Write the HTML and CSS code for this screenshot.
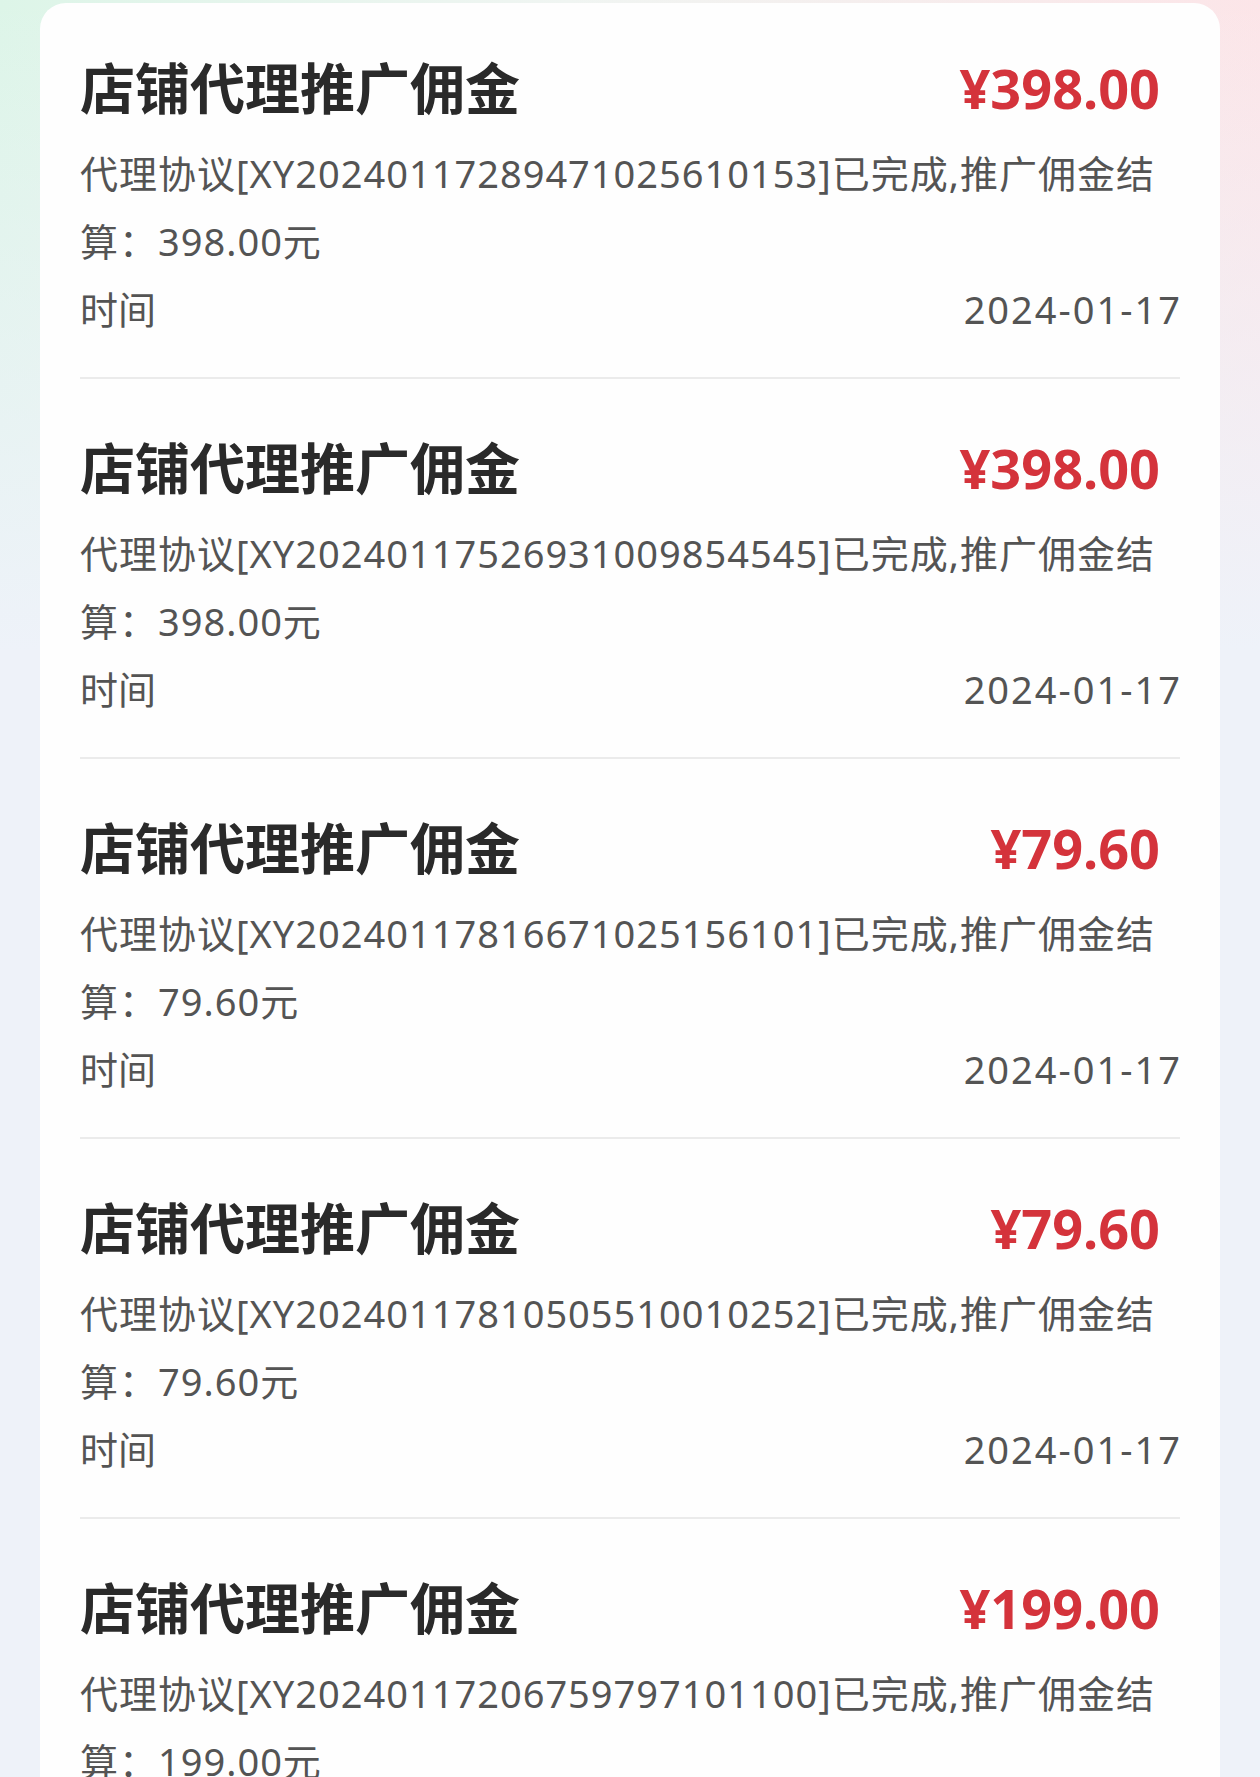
FILE: index.html
```html
<!DOCTYPE html>
<html>
<head>
    <meta charset="utf-8">
    <title>佣金明细</title>
    <link rel="stylesheet" href="styles.css">
</head>
<body>
    <div class="card">
        <div class="item">
            <div class="item-head">
                <span class="item-title">店铺代理推广佣金</span>
                <span class="item-amount">¥398.00</span>
            </div>
            <p class="item-desc">代理协议[XY20240117289471025610153]已完成,推广佣金结算：398.00元</p>
            <div class="item-time"><span>时间</span><span class="item-date">2024-01-17</span></div>
        </div>
        <div class="item">
            <div class="item-head">
                <span class="item-title">店铺代理推广佣金</span>
                <span class="item-amount">¥398.00</span>
            </div>
            <p class="item-desc">代理协议[XY20240117526931009854545]已完成,推广佣金结算：398.00元</p>
            <div class="item-time"><span>时间</span><span class="item-date">2024-01-17</span></div>
        </div>
        <div class="item">
            <div class="item-head">
                <span class="item-title">店铺代理推广佣金</span>
                <span class="item-amount">¥79.60</span>
            </div>
            <p class="item-desc">代理协议[XY20240117816671025156101]已完成,推广佣金结算：79.60元</p>
            <div class="item-time"><span>时间</span><span class="item-date">2024-01-17</span></div>
        </div>
        <div class="item">
            <div class="item-head">
                <span class="item-title">店铺代理推广佣金</span>
                <span class="item-amount">¥79.60</span>
            </div>
            <p class="item-desc">代理协议[XY20240117810505510010252]已完成,推广佣金结算：79.60元</p>
            <div class="item-time"><span>时间</span><span class="item-date">2024-01-17</span></div>
        </div>
        <div class="item">
            <div class="item-head">
                <span class="item-title">店铺代理推广佣金</span>
                <span class="item-amount">¥199.00</span>
            </div>
            <p class="item-desc">代理协议[XY20240117206759797101100]已完成,推广佣金结算：199.00元</p>
            <div class="item-time"><span>时间</span><span class="item-date">2024-01-17</span></div>
        </div>
    </div>
</body>
</html>
```

FILE: styles.css
```css
/* light app theme */
:root {
    --card: #fefefe;
    --title: #2a2a2a;
    --text: #545454;
    --red: #d4333b;
    --line: #ebebeb;
}
html, body { margin: 0; padding: 0; }
body {
    font-family: 'Noto Sans', 'Noto Sans CJK SC', sans-serif;
    background:
        linear-gradient(to bottom, rgba(238, 242, 249, 0) 0, #eef2f9 650px),
        linear-gradient(to right, #ddf5e8 0, #f0f5f2 45%, #fce5e8 100%);
    background-repeat: no-repeat;
    background-color: #eef2f9;
    min-height: 1777px;
    padding-top: 3px;
}
.card { margin: 0 40px; background: var(--card); border-radius: 26px 26px 0 0; padding: 0 40px; }
.item { padding: 47px 0 34px; border-bottom: 2px solid var(--line); }
.item + .item { padding-top: 51px; }
.item-head { display: flex; justify-content: space-between; align-items: center; height: 76px; }
.item-title { font-size: 55px; font-weight: bold; color: var(--title); line-height: 76px; }
.item-amount { font-size: 54px; font-weight: bold; color: var(--red); margin-right: 20px; line-height: 76px; }
.item-desc { margin: 13px 0 0; font-size: 38px; line-height: 68px; color: var(--text); letter-spacing: 1px; }
.item-time { display: flex; justify-content: space-between; font-size: 38px; line-height: 68px; color: var(--text); }
.item-date { letter-spacing: 2px; margin-right: -2px; }
```
